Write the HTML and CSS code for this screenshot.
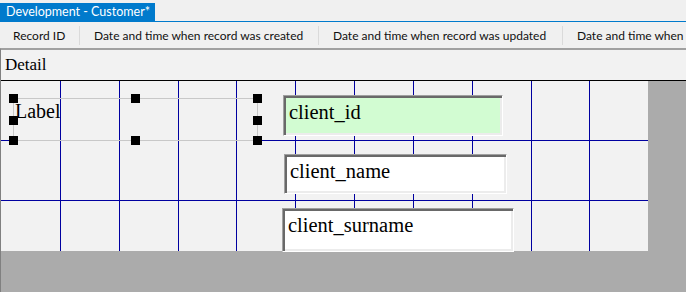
FILE: index.html
```html
<!DOCTYPE html>
<html lang="en">
<head>
  <meta charset="UTF-8">
  <title>Development - Customer*</title>
  <link rel="stylesheet" href="styles.css">
</head>
<body>
  <div class="tabbar">
    <div class="tab">Development - Customer*</div>
  </div>
  <div class="columns">
    <div class="col col-id">Record ID</div>
    <span class="sep"></span>
    <div class="col col-created">Date and time when record was created</div>
    <span class="sep"></span>
    <div class="col col-updated">Date and time when record was updated</div>
    <span class="sep"></span>
    <div class="col col-last">Date and time when</div>
  </div>
  <div class="designer">
    <div class="section-bar">Detail</div>
    <div class="canvas">
      <!-- design grid -->
      <svg class="grid" width="647" height="170" viewBox="0 0 647 170">
        <g stroke="#0000a0" stroke-width="1" shape-rendering="crispEdges">
          <line x1="59.5" y1="0" x2="59.5" y2="170"/>
          <line x1="118.5" y1="0" x2="118.5" y2="170"/>
          <line x1="177.5" y1="0" x2="177.5" y2="170"/>
          <line x1="235.5" y1="0" x2="235.5" y2="170"/>
          <line x1="294.5" y1="0" x2="294.5" y2="170"/>
          <line x1="353.5" y1="0" x2="353.5" y2="170"/>
          <line x1="412.5" y1="0" x2="412.5" y2="170"/>
          <line x1="471.5" y1="0" x2="471.5" y2="170"/>
          <line x1="530.5" y1="0" x2="530.5" y2="170"/>
          <line x1="588.5" y1="0" x2="588.5" y2="170"/>
          <line x1="0" y1="59.5" x2="647" y2="59.5"/>
          <line x1="0" y1="119.5" x2="647" y2="119.5"/>
        </g>
      </svg>
      <!-- selected label control -->
      <div class="label-sel">
        Label
        <span class="handle h-tl"></span>
        <span class="handle h-tm"></span>
        <span class="handle h-tr"></span>
        <span class="handle h-ml"></span>
        <span class="handle h-mr"></span>
        <span class="handle h-bl"></span>
        <span class="handle h-bm"></span>
        <span class="handle h-br"></span>
      </div>
      <div class="field field-id">client_id</div>
      <div class="field field-name">client_name</div>
      <div class="field field-surname">client_surname</div>
    </div>
  </div>
</body>
</html>
```

FILE: styles.css
```css
/* General */
body {
  margin: 0;
  width: 686px;
  height: 292px;
  overflow: hidden;
  background: #f0f0f0;
  font-family: 'Lato', 'Noto Sans', sans-serif;
  color: #111;
}

/* Document tab */
.tabbar {
  height: 21px;
  display: flex;
  align-items: flex-end;
  border-bottom: 1px solid #007acc;
}

.tab {
  min-width: 151px;
  height: 18px;
  box-sizing: border-box;
  padding: 0 5px 0 6px;
  background: #007acc;
  color: #fff;
  font-size: 12.5px;
  line-height: 18px;
  white-space: nowrap;
}

/* Field list header */
.columns {
  height: 26px;
  display: flex;
  align-items: center;
  font-size: 12px;
  white-space: nowrap;
  overflow: hidden;
}

.col {
  box-sizing: border-box;
  padding-left: 14px;
  flex: none;
}

.col-id {
  width: 79px;
  padding-left: 13px;
}

.col-created {
  width: 238px;
}

.col-updated {
  width: 243px;
}

.sep {
  flex: none;
  width: 1px;
  height: 19px;
  background: #dadada;
}

/* Designer surface */
.designer {
  height: 244px;
  border-top: 2px solid #a0a0a0;
  border-left: 1px solid #808080;
  background: #ababab;
}

.section-bar {
  height: 30px;
  padding-left: 4px;
  background: #f2f2f2;
  border-bottom: 1px solid #000;
  font-family: 'Liberation Serif', serif;
  font-size: 17px;
  line-height: 30px;
  color: #000;
}

.canvas {
  position: relative;
  width: 647px;
  height: 170px;
  background: #f2f2f2;
  font-family: 'Liberation Serif', serif;
  font-size: 20px;
  line-height: 20px;
  color: #000;
}

.grid {
  position: absolute;
  left: 0;
  top: 0;
  display: block;
}

/* Selected label with sizing handles */
.label-sel {
  position: absolute;
  left: 12px;
  top: 17px;
  width: 243px;
  height: 41px;
  border: 1px solid #c8c8c8;
  text-indent: 1px;
  line-height: 24px;
}

.handle {
  position: absolute;
  width: 9px;
  height: 9px;
  background: #000;
}

.h-tl, .h-ml, .h-bl { left: -5px; }
.h-tm, .h-bm { left: calc(50% - 5px); }
.h-tr, .h-mr, .h-br { right: -5px; }
.h-tl, .h-tm, .h-tr { top: -5px; }
.h-ml, .h-mr { top: calc(50% - 4px); }
.h-bl, .h-bm, .h-br { bottom: -5px; }

/* Bound text boxes */
.field {
  position: absolute;
  box-sizing: border-box;
  padding: 6px 5px 0;
  background: #fff;
  border: 1px solid;
  border-color: #a0a0a0 #fff #fff #a0a0a0;
  box-shadow: inset 2px 2px 0 #696969, inset -2px -2px 0 #ececec;
  font-size: 20.5px;
  white-space: nowrap;
}

.field-id {
  left: 282px;
  top: 14px;
  width: 220px;
  height: 41px;
  background: #d2fcd2;
}

.field-name {
  left: 283px;
  top: 73px;
  width: 223px;
  height: 40px;
}

.field-surname {
  left: 281px;
  top: 127px;
  width: 232px;
  height: 44px;
}
```
